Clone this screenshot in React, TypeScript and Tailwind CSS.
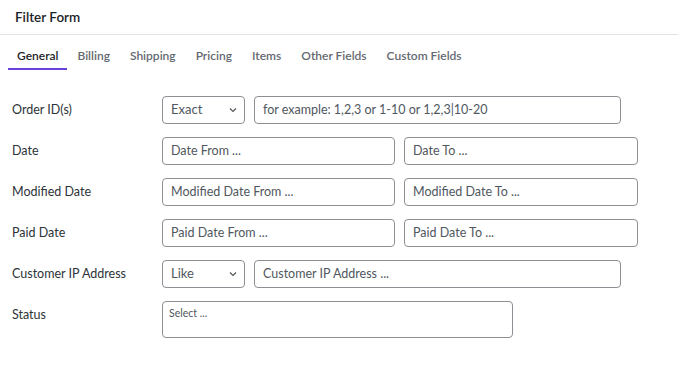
const tabs = ['General', 'Billing', 'Shipping', 'Pricing', 'Items', 'Other Fields', 'Custom Fields'];

const inputCls =
  'h-[28px] rounded-[4px] border border-[#8c8f94] bg-white px-2 text-[12.5px] text-[#50575e] flex items-center';

function Chevron() {
  return (
    <svg width="10" height="10" viewBox="0 0 10 10" className="text-[#50575e]">
      <path d="M2 3.5 L5 6.5 L8 3.5" fill="none" stroke="currentColor" strokeWidth="1.2" />
    </svg>
  );
}

function SelectBox({ value }: { value: string }) {
  return (
    <div className={`${inputCls} w-[83px] justify-between pr-[6px] text-[13px] text-[#2c3338]`}>
      <span>{value}</span>
      <Chevron />
    </div>
  );
}

function Row({ label, children }: { label: string; children: React.ReactNode }) {
  return (
    <div className="flex items-center">
      <div className="w-[150px] text-[12.5px] text-[#2c3338]">{label}</div>
      <div className="flex items-center gap-[9px]">{children}</div>
    </div>
  );
}

function RangeInputs({ from, to }: { from: string; to: string }) {
  return (
    <>
      <div className={`${inputCls} w-[233px]`}>{from}</div>
      <div className={`${inputCls} w-[234px]`}>{to}</div>
    </>
  );
}

export default function App() {
  return (
    <div className="h-[366px] w-[678px] bg-white font-['Lato',sans-serif]">
      <div className="flex h-[35px] items-center border-b border-[#e2e4e7] px-[15px] text-[13.5px] font-semibold text-[#1d2327]">
        Filter Form
      </div>
      <nav className="flex px-[8px]">
        {tabs.map((t, i) => (
          <div
            key={t}
            className={
              i === 0
                ? 'flex h-[35px] items-end border-b-2 border-[#6741d9] px-[9px] pb-[3px] text-[12px] font-semibold text-[#1d2327]'
                : 'flex h-[35px] items-end border-b-2 border-transparent px-[10px] pb-[3px] text-[12px] font-semibold text-[#646970]'
            }
          >
            {t}
          </div>
        ))}
      </nav>
      <div className="flex flex-col gap-[13px] px-[12px] pt-[26px]">
        <Row label="Order ID(s)">
          <SelectBox value="Exact" />
          <div className={`${inputCls} w-[367px]`}>for example: 1,2,3 or 1-10 or 1,2,3|10-20</div>
        </Row>
        <Row label="Date">
          <RangeInputs from="Date From ..." to="Date To ..." />
        </Row>
        <Row label="Modified Date">
          <RangeInputs from="Modified Date From ..." to="Modified Date To ..." />
        </Row>
        <Row label="Paid Date">
          <RangeInputs from="Paid Date From ..." to="Paid Date To ..." />
        </Row>
        <Row label="Customer IP Address">
          <SelectBox value="Like" />
          <div className={`${inputCls} w-[367px]`}>Customer IP Address ...</div>
        </Row>
        <div className="flex items-start">
          <div className="w-[150px] pt-[5px] text-[12.5px] text-[#2c3338]">Status</div>
          <div className="h-[37px] w-[351px] rounded-[4px] border border-[#8c8f94] px-[6px] pt-[4px] text-[10.5px] text-[#50575e]">
            Select ...
          </div>
        </div>
      </div>
    </div>
  );
}
